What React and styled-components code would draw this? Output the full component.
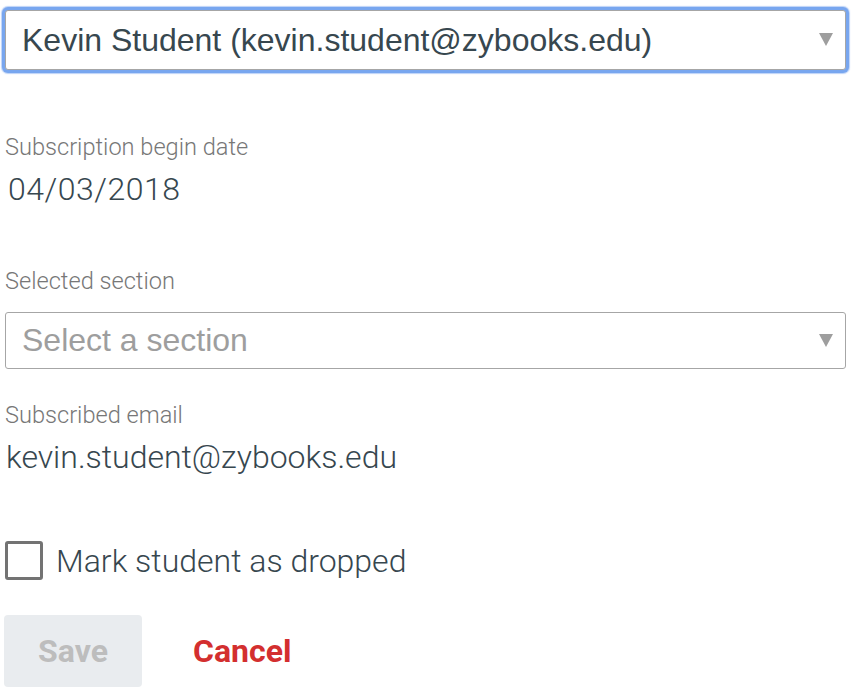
import React from "react";
import styled, { createGlobalStyle } from "styled-components";

const Global = createGlobalStyle`
  html, body { margin: 0; padding: 0; background: #ffffff; }
  body { font-family: Roboto, "Liberation Sans", sans-serif; }
`;

const Page = styled.div`
  width: 864px;
  box-sizing: border-box;
  padding: 10px 18px 0 5px;
  display: flex;
  flex-direction: column;
`;

const SelectBox = styled.div`
  position: relative;
  box-sizing: border-box;
  height: ${(p) => p.$h}px;
  margin-top: ${(p) => p.$mt || 0}px;
  border: 1px solid #a6a6a6;
  border-radius: 3px;
  background: #fff;
  display: flex;
  align-items: center;
  padding: 0 48px 0 16px;
  font-family: "Liberation Sans", Arial, sans-serif;
  font-size: 32px;
  color: ${(p) => (p.$placeholder ? "#9e9e9e" : "#37474f")};
  box-shadow: ${(p) =>
    p.$focused ? "0 0 0 3px #78a6ef, 0 0 1px 4px rgba(120,166,239,0.5)" : "none"};
`;

const Arrow = styled.span`
  position: absolute;
  right: 12px;
  top: 50%;
  margin-top: -7px;
  width: 0;
  height: 0;
  border-left: 7.5px solid transparent;
  border-right: 7.5px solid transparent;
  border-top: 13px solid #9e9e9e;
`;

const Field = styled.div`
  display: flex;
  flex-direction: column;
  margin-top: ${(p) => p.$mt}px;
`;

const Label = styled.div`
  font-family: Roboto, sans-serif;
  font-weight: 300;
  font-size: 23.6px;
  line-height: 28px;
  color: #777777;
`;

const Value = styled.div`
  font-family: Roboto, sans-serif;
  font-weight: 300;
  font-size: 32px;
  line-height: 36px;
  color: #37474f;
  letter-spacing: ${(p) => p.$ls || 0}px;
  margin-top: ${(p) => p.$mt}px;
  padding-left: ${(p) => p.$pl}px;
`;

const CheckRow = styled.label`
  display: flex;
  align-items: center;
  gap: 13px;
  margin-top: ${(p) => p.$mt}px;
`;

const CheckBox = styled.span`
  box-sizing: border-box;
  flex: none;
  width: 38px;
  height: 39px;
  border: 3px solid #737373;
  border-radius: 3px;
  background: #fff;
`;

const CheckText = styled.span`
  font-family: Roboto, sans-serif;
  font-weight: 300;
  font-size: 32px;
  line-height: 38px;
  color: #37474f;
`;

const Actions = styled.div`
  display: flex;
  align-items: center;
  margin-top: 35px;
  margin-left: -1px;
  gap: 51px;
`;

const SaveButton = styled.button`
  box-sizing: border-box;
  width: 138px;
  height: 72px;
  border: none;
  border-radius: 4px;
  background: #e9ecef;
  color: #bdbdbd;
  font-family: Roboto, sans-serif;
  font-weight: 700;
  font-size: 32px;
  padding: 0;
`;

const CancelButton = styled.button`
  border: none;
  background: none;
  padding: 0;
  color: #d32f2f;
  font-family: Roboto, sans-serif;
  font-weight: 700;
  font-size: 32px;
`;

export default function App() {
  return (
    <>
      <Global />
      <Page>
        <SelectBox $h={60} $focused>
          Kevin Student (kevin.student@zybooks.edu)
          <Arrow />
        </SelectBox>
        <Field $mt={63}>
          <Label>Subscription begin date</Label>
          <Value $mt={10} $pl={3} $ls={0.5}>04/03/2018</Value>
        </Field>
        <Field $mt={60}>
          <Label>Selected section</Label>
          <SelectBox $h={57} $mt={17} $placeholder>
            Select a section
            <Arrow />
          </SelectBox>
        </Field>
        <Field $mt={32}>
          <Label>Subscribed email</Label>
          <Value $mt={10} $pl={1}>kevin.student@zybooks.edu</Value>
        </Field>
        <CheckRow $mt={66}>
          <CheckBox />
          <CheckText>Mark student as dropped</CheckText>
        </CheckRow>
        <Actions>
          <SaveButton>Save</SaveButton>
          <CancelButton>Cancel</CancelButton>
        </Actions>
      </Page>
    </>
  );
}
